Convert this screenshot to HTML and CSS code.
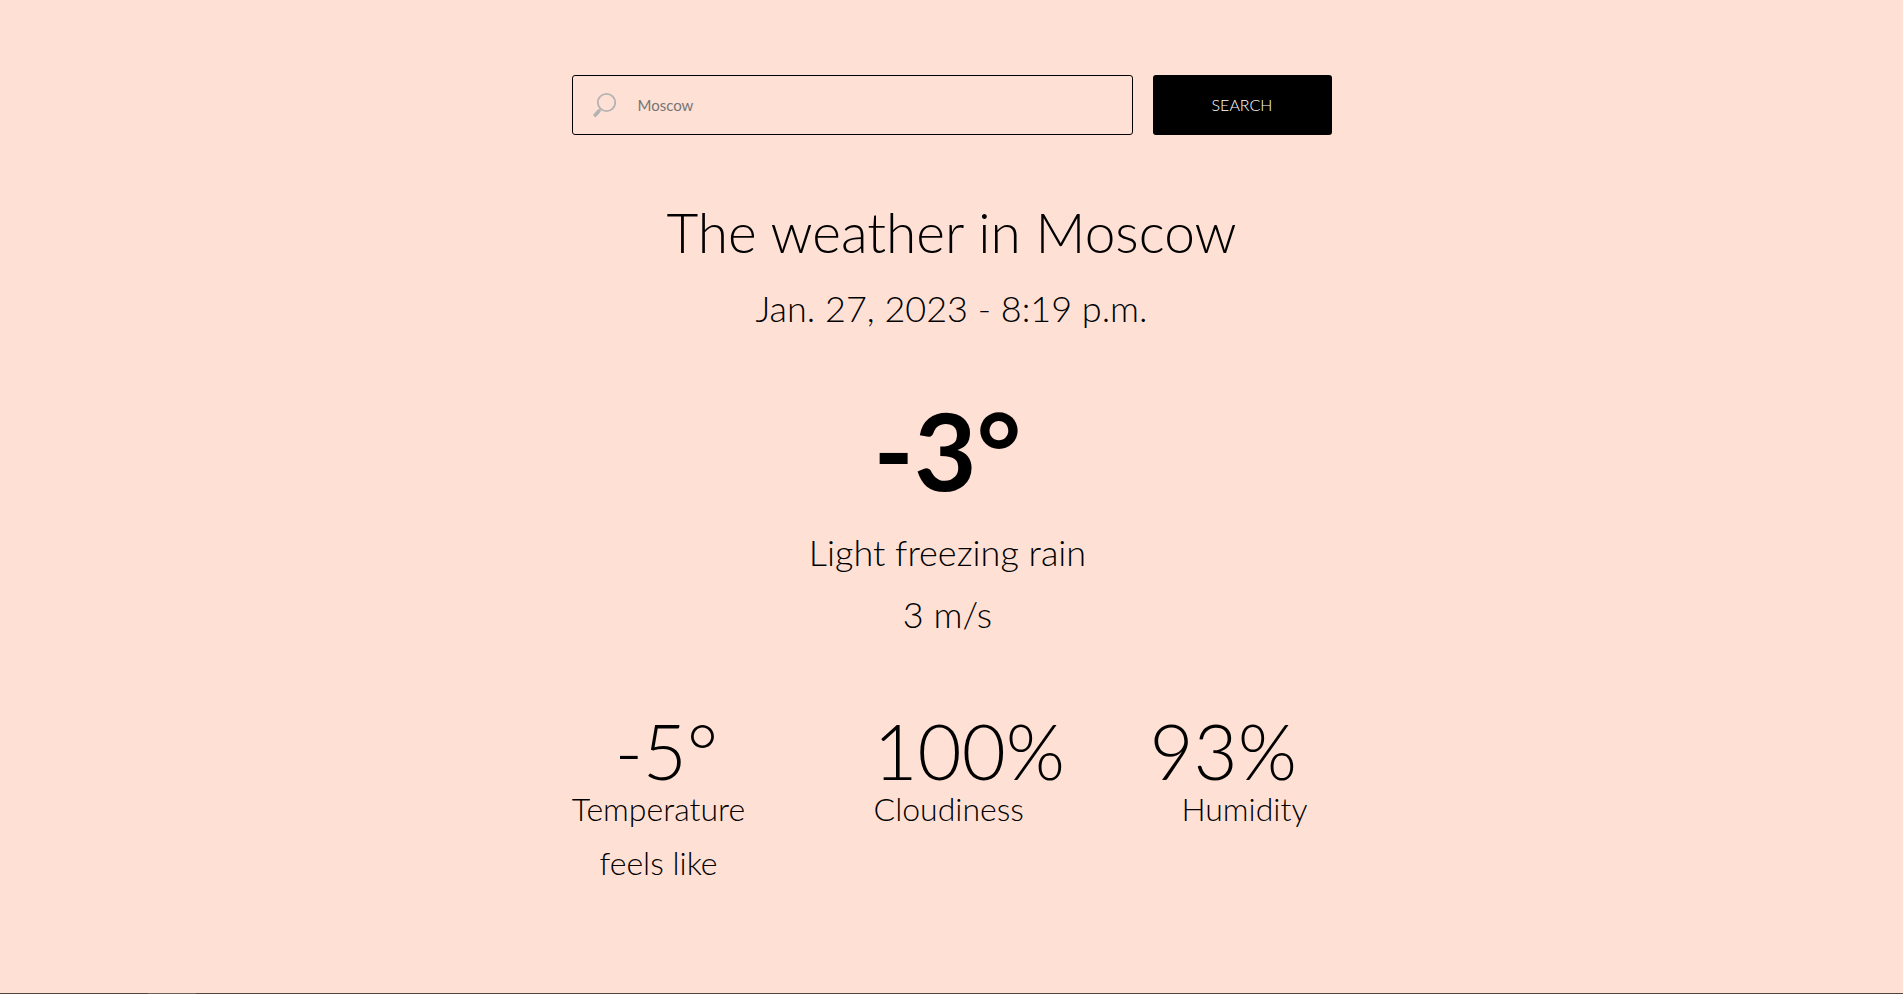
FILE: index.html
```
<!DOCTYPE html>
<html lang="en">
<head>
<meta charset="utf-8">
<meta name="viewport" content="width=device-width, initial-scale=1">
<title>Weather</title>
<link rel="stylesheet" href="styles.css">
</head>
<body>
<main class="page">
  <form class="search">
    <label class="field">
      <svg class="field-icon" viewBox="0 0 24 26" aria-hidden="true">
        <circle cx="14.5" cy="10.5" r="8.7" fill="none" stroke="#b3b3b3" stroke-width="1.8"/>
        <path d="M8.7 17L7 18.9" stroke="#b3b3b3" stroke-width="1.8"/>
        <path d="M7.6 18.3L2.2 24.2" stroke="#b3b3b3" stroke-width="3.6"/>
      </svg>
      <input class="field-input" type="text" name="city" placeholder="Moscow" aria-label="City">
    </label>
    <button class="search-button" type="submit">SEARCH</button>
  </form>
  <h1 class="title">The weather in Moscow</h1>
  <p class="date">Jan. 27, 2023 - 8:19 p.m.</p>
  <section class="current">
    <p class="temperature">-3°</p>
    <p class="summary">Light freezing rain</p>
    <p class="summary">3 m/s</p>
  </section>
  <section class="stats">
    <div class="stat stat-feels">
      <p class="stat-value">-5°</p>
      <p class="stat-label">Temperature feels like</p>
    </div>
    <div class="stat stat-clouds">
      <p class="stat-value">100%</p>
      <p class="stat-label">Cloudiness</p>
    </div>
    <div class="stat stat-humidity">
      <p class="stat-value">93%</p>
      <p class="stat-label">Humidity</p>
    </div>
  </section>
</main>
<footer class="edge"><span class="edge-mark"></span></footer>
</body>
</html>
```
FILE: styles.css
```
* { box-sizing: border-box; }
body {
  margin: 0;
  min-height: 100vh;
  display: flex;
  flex-direction: column;
  background: #ffe0d5;
  color: #000;
  font-family: Lato, "Open Sans", sans-serif;
  font-weight: 300;
}
h1, p { margin: 0; font-weight: 300; }
.page {
  width: 100%;
  max-width: 760px;
  margin: 0 auto;
  padding-top: 75px;
  flex: 1;
  text-align: center;
}
.search { display: flex; gap: 20px; }
.field {
  flex: 1;
  display: flex;
  align-items: center;
  gap: 22px;
  height: 60px;
  padding: 0 19px;
  border: 1px solid #000;
  border-radius: 3px;
}
.field-icon { width: 24px; height: 26px; flex: none; }
.field-input {
  flex: 1;
  min-width: 0;
  padding: 0;
  border: 0;
  outline: 0;
  background: transparent;
  font: 400 15px/24px Lato, sans-serif;
}
.field-input::placeholder { color: #757575; opacity: 1; }
.search-button {
  width: 179px;
  height: 60px;
  border: 0;
  border-radius: 3px;
  background: #000;
  color: #fff;
  font: 300 16px/24px Lato, sans-serif;
}
.title { margin-top: 57px; font-size: 55px; line-height: 80px; }
.date { margin-top: 8px; font-size: 36px; line-height: 56px; }
.current { margin-top: 41px; padding-right: 8px; }
.temperature { font-size: 108px; line-height: 144px; font-weight: 700; }
.summary { font-size: 36px; line-height: 62px; }
.stats {
  display: grid;
  grid-template-columns: 302fr 276fr 182fr;
  margin-top: 75px;
}
.stat-value { font-size: 76px; line-height: 62px; }
.stat-label { font-size: 32px; line-height: 54px; }
.stat-feels { padding-right: 128px; }
.stat-feels .stat-value { padding-left: 16px; }
.stat-clouds { text-align: left; }
.stat-humidity { padding-right: 24px; text-align: left; }
.stat-humidity .stat-label { text-align: right; }
.edge { display: flex; height: 1px; background: #54443f; }
.edge-mark { width: 48px; margin-left: 148px; background: #6d615c; }
```
